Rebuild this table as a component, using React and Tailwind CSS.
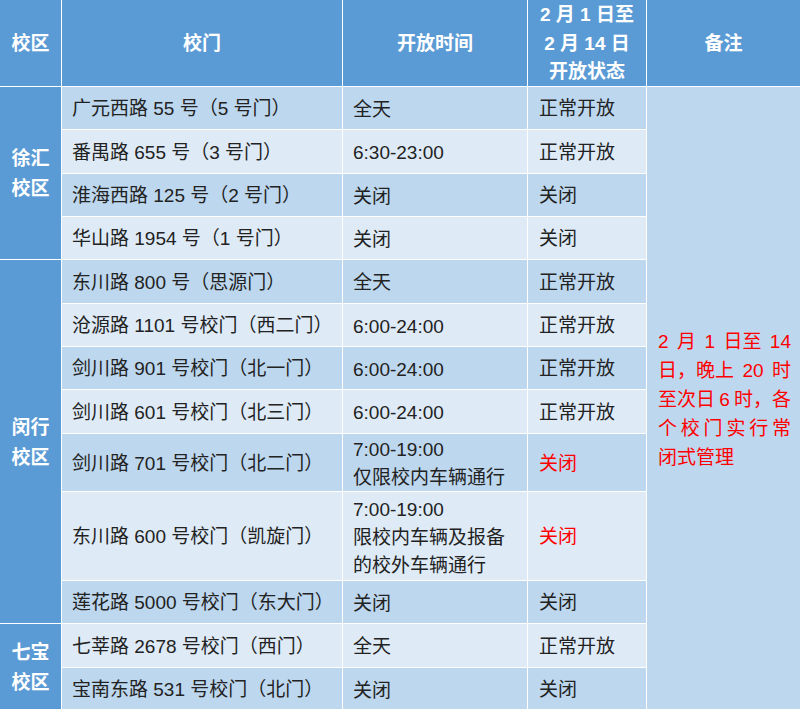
import React from "react";

const rows = [
  { gate: "广元西路 55 号（5 号门）", time: ["全天"], status: "正常开放" },
  { gate: "番禺路 655 号（3 号门）", time: ["6:30-23:00"], status: "正常开放" },
  { gate: "淮海西路 125 号（2 号门）", time: ["关闭"], status: "关闭" },
  { gate: "华山路 1954 号（1 号门）", time: ["关闭"], status: "关闭" },
  { gate: "东川路 800 号（思源门）", time: ["全天"], status: "正常开放" },
  { gate: "沧源路 1101 号校门（西二门）", time: ["6:00-24:00"], status: "正常开放" },
  { gate: "剑川路 901 号校门（北一门）", time: ["6:00-24:00"], status: "正常开放" },
  { gate: "剑川路 601 号校门（北三门）", time: ["6:00-24:00"], status: "正常开放" },
  { gate: "剑川路 701 号校门（北二门）", time: ["7:00-19:00", "仅限校内车辆通行"], status: "关闭", red: true },
  { gate: "东川路 600 号校门（凯旋门）", time: ["7:00-19:00", "限校内车辆及报备", "的校外车辆通行"], status: "关闭", red: true },
  { gate: "莲花路 5000 号校门（东大门）", time: ["关闭"], status: "关闭" },
  { gate: "七莘路 2678 号校门（西门）", time: ["全天"], status: "正常开放" },
  { gate: "宝南东路 531 号校门（北门）", time: ["关闭"], status: "关闭" },
];

const campuses = {
  0: { name: ["徐汇", "校区"], span: "row-span-4" },
  4: { name: ["闵行", "校区"], span: "row-span-7" },
  11: { name: ["七宝", "校区"], span: "row-span-2" },
};

const remarkLines = [
  ["2", "月", "1", "日至", "14"],
  ["日，晚上", "20", "时"],
  ["至次日", "6", "时，各"],
  ["个", "校", "门", "实", "行", "常"],
];

function Campus({ name, span }) {
  return (
    <div className={`${span} bg-[#5b9bd5] flex flex-col items-center justify-center pt-[2px] text-white font-bold text-[19px] leading-[30px]`}>
      {name.map((n) => (
        <div key={n}>{n}</div>
      ))}
    </div>
  );
}

export default function App() {
  return (
    <div className="w-[800px] h-[709px] overflow-hidden bg-white font-['Liberation_Sans','Noto_Sans_CJK_SC',sans-serif] text-[19px] text-[#222]">
      <div className="grid grid-cols-[61px_280px_184px_118px_153px] grid-rows-[86px_42px_43px_42px_42px_43px_42px_42px_43px_57px_88px_42px_43px_42px] gap-px bg-white">
        <div className="bg-[#5b9bd5] flex items-center justify-center pt-[2px] text-white font-bold">校区</div>
        <div className="bg-[#5b9bd5] flex items-center justify-center pt-[2px] text-white font-bold">校门</div>
        <div className="bg-[#5b9bd5] flex items-center justify-center pt-[2px] text-white font-bold">开放时间</div>
        <div className="bg-[#5b9bd5] flex flex-col items-center justify-center pt-[2px] text-white font-bold leading-[28.5px]">
          <div>2 月 1 日至</div>
          <div>2 月 14 日</div>
          <div>开放状态</div>
        </div>
        <div className="bg-[#5b9bd5] flex items-center justify-center pt-[2px] text-white font-bold">备注</div>

        {rows.map((r, i) => {
          const bg = i % 2 === 0 ? "bg-[#bdd7ee]" : "bg-[#deebf7]";
          return (
            <React.Fragment key={i}>
              {campuses[i] && <Campus {...campuses[i]} />}
              <div className={`${bg} flex items-center pl-[10px] pt-[3px] whitespace-nowrap`}>{r.gate}</div>
              <div className={`${bg} flex flex-col justify-center pl-[10px] pt-[3px] leading-[28px] whitespace-nowrap`}>
                {r.time.map((t) => (
                  <div key={t}>{t}</div>
                ))}
              </div>
              <div className={`${bg} flex items-center pl-[11px] pt-[3px] whitespace-nowrap ${r.red ? "text-[#ff0000]" : ""}`}>{r.status}</div>
              {i === 0 && (
                <div className="row-span-13 bg-[#bdd7ee] flex flex-col justify-center pl-[11px] pr-[9px] pt-[2px] text-[#ff0000] leading-[29px] whitespace-nowrap">
                  {remarkLines.map((line, k) => (
                    <div key={k} className="flex justify-between">
                      {line.map((t, j) => (
                        <span key={j}>{t}</span>
                      ))}
                    </div>
                  ))}
                  <div>闭式管理</div>
                </div>
              )}
            </React.Fragment>
          );
        })}
      </div>
    </div>
  );
}
